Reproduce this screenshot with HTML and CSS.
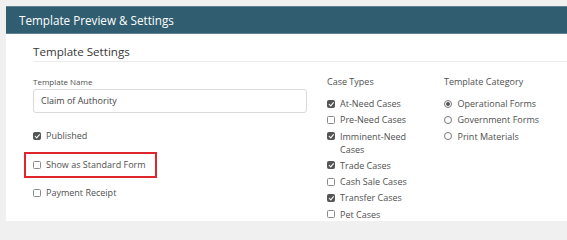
FILE: index.html
```html
<!DOCTYPE html>
<html>
<head>
<meta charset="utf-8">
<link rel="stylesheet" href="styles.css">
</head>
<body>
<div class="panel">
  <div class="panel-header">Template Preview &amp; Settings</div>
  <div class="panel-body">
    <h2 class="section-title">Template Settings</h2>
    <div class="grid">
      <div class="col-left">
        <div class="field-label">Template Name</div>
        <div class="text-input">Claim of Authority</div>
        <div class="left-checks">
          <label class="check-row first"><span class="cb checked"></span>Published</label>
          <div class="highlight"><label class="check-row"><span class="cb"></span>Show as Standard Form</label></div>
          <label class="check-row"><span class="cb"></span>Payment Receipt</label>
        </div>
      </div>
      <div class="col-cases">
        <div class="group-label">Case Types</div>
        <ul class="opt-list">
          <li class="check-item"><span class="cb checked"></span><span class="item-text">At-Need Cases</span></li>
          <li class="check-item"><span class="cb"></span><span class="item-text">Pre-Need Cases</span></li>
          <li class="check-item"><span class="cb checked"></span><span class="item-text">Imminent-Need Cases</span></li>
          <li class="check-item"><span class="cb checked"></span><span class="item-text">Trade Cases</span></li>
          <li class="check-item"><span class="cb"></span><span class="item-text">Cash Sale Cases</span></li>
          <li class="check-item"><span class="cb checked"></span><span class="item-text">Transfer Cases</span></li>
          <li class="check-item"><span class="cb"></span><span class="item-text">Pet Cases</span></li>
        </ul>
      </div>
      <div class="col-cat">
        <div class="group-label">Template Category</div>
        <ul class="opt-list">
          <li class="check-item"><span class="rb selected"></span><span>Operational Forms</span></li>
          <li class="check-item"><span class="rb"></span><span>Government Forms</span></li>
          <li class="check-item"><span class="rb"></span><span>Print Materials</span></li>
        </ul>
      </div>
    </div>
  </div>
</div>
</body>
</html>
```

FILE: styles.css
```css
html, body {
  margin: 0;
  padding: 0;
  overflow: hidden;
}
body {
  background: #f0f0f0;
  font-family: "Open Sans", "Noto Sans", sans-serif;
  color: #505050;
  width: 567px;
  height: 221px;
}
.panel {
  margin: 6px 0 0 6px;
  width: 561px;
  height: 215px;
  background: #fff;
}
.panel-header {
  height: 28px;
  box-sizing: border-box;
  background: #305d70;
  border-top: 1px solid #5f8292;
  border-bottom: 1px solid #5f8292;
  color: #fff;
  font-size: 11.7px;
  line-height: 27px;
  padding-left: 13px;
}
.panel-body {
  padding: 0 0 0 27px;
}
.section-title {
  margin: 0;
  padding: 10px 0 1px 0;
  font-size: 11.6px;
  font-weight: normal;
  color: #383838;
  line-height: 16px;
  border-bottom: 1px solid #ebebeb;
}
.grid {
  display: flex;
  padding-top: 13px;
}
.col-left {
  width: 274px;
  margin-right: 20px;
}
.col-cases {
  width: 117px;
}
.col-cat {
  width: 110px;
}
.field-label {
  font-size: 8px;
  line-height: 13px;
  color: #505050;
  margin-bottom: 1px;
}
.text-input {
  box-sizing: border-box;
  height: 24px;
  border: 1px solid #dadada;
  border-radius: 3px;
  font-size: 9px;
  line-height: 22px;
  padding-left: 7px;
  color: #444;
}
.left-checks {
  display: flex;
  flex-direction: column;
  margin-top: 15px;
}
.check-row {
  display: flex;
  align-items: center;
  font-size: 9px;
  line-height: 16px;
  height: 16px;
  white-space: nowrap;
}
.check-row.first {
  margin-bottom: 8px;
}
.highlight {
  margin-left: -9px;
  width: 133px;
  height: 26px;
  box-sizing: border-box;
  border: 2px solid #e0262d;
  padding: 3px 0 0 7px;
  margin-bottom: 7px;
}
.group-label {
  font-size: 9px;
  line-height: 13px;
  color: #505050;
  margin-bottom: 9px;
}
.opt-list {
  list-style: none;
  margin: 0;
  padding: 0;
  display: flex;
  flex-direction: column;
  gap: 3.3px;
}
.check-item {
  display: flex;
  align-items: flex-start;
  font-size: 9px;
  line-height: 13px;
}
.item-text {
  max-width: 80px;
}
.cb {
  flex: none;
  display: inline-block;
  box-sizing: border-box;
  width: 8px;
  height: 8px;
  border: 1px solid #8a8a8a;
  border-radius: 1.5px;
  background: #fff;
  margin-right: 5px;
  position: relative;
}
.check-item .cb,
.check-item .rb {
  margin-top: 2.5px;
}
.cb.checked {
  background: #555;
  border-color: #555;
}
.cb.checked::after {
  content: "";
  position: absolute;
  left: 1.6px;
  top: 0px;
  width: 1.6px;
  height: 3.6px;
  border: solid #fff;
  border-width: 0 1.3px 1.3px 0;
  transform: rotate(40deg);
}
.rb {
  flex: none;
  display: inline-block;
  box-sizing: border-box;
  width: 8px;
  height: 8px;
  border: 1px solid #777;
  border-radius: 50%;
  background: #fff;
  margin-right: 5.5px;
  position: relative;
}
.rb.selected::after {
  content: "";
  position: absolute;
  left: 1px;
  top: 1px;
  width: 4px;
  height: 4px;
  border-radius: 50%;
  background: #555;
}
```
